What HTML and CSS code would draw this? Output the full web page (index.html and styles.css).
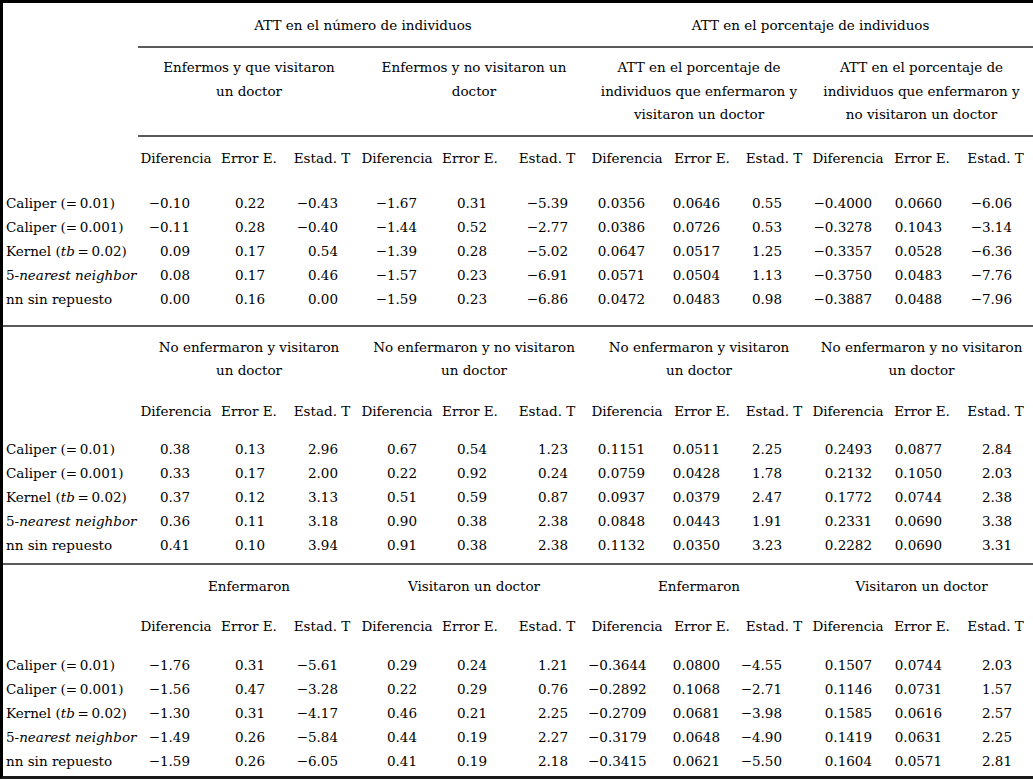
FILE: index.html
```html
<!DOCTYPE html>
<html lang="es">
<head>
<meta charset="utf-8">
<title>ATT</title>
<link rel="stylesheet" href="styles.css">
</head>
<body>
<table class="results">
  <colgroup>
    <col class="w-label">
    <col class="w76"><col class="w70"><col class="w76">
    <col class="w74"><col class="w72"><col class="w82">
    <col class="w78"><col class="w72"><col class="w72">
    <col class="w76"><col class="w72"><col class="w75">
  </colgroup>
  <tbody class="sec sec1">
    <tr class="title-row">
      <td class="label"></td>
      <th class="group" colspan="6">ATT en el número de individuos</th>
      <th class="group" colspan="6">ATT en el porcentaje de individuos</th>
    </tr>
    <tr class="sub-row">
      <td class="label"></td>
      <th class="sub" colspan="3">Enfermos y que visitaron<br>un doctor</th>
      <th class="sub" colspan="3">Enfermos y no visitaron un<br>doctor</th>
      <th class="sub" colspan="3">ATT en el porcentaje de<br>individuos que enfermaron y<br>visitaron un doctor</th>
      <th class="sub" colspan="3">ATT en el porcentaje de<br>individuos que enfermaron y<br>no visitaron un doctor</th>
    </tr>
    <tr class="stat-row">
      <td class="label"></td>
      <th>Diferencia</th><th>Error E.</th><th>Estad. T</th>
      <th>Diferencia</th><th>Error E.</th><th>Estad. T</th>
      <th>Diferencia</th><th>Error E.</th><th>Estad. T</th>
      <th>Diferencia</th><th>Error E.</th><th>Estad. T</th>
    </tr>
    <tr class="data-row">
      <td class="label">Caliper (=&thinsp;0.01)</td>
      <td>−0.10</td><td>0.22</td><td>−0.43</td><td>−1.67</td><td>0.31</td><td>−5.39</td>
      <td>0.0356</td><td>0.0646</td><td>0.55</td><td>−0.4000</td><td>0.0660</td><td>−6.06</td>
    </tr>
    <tr class="data-row">
      <td class="label">Caliper (=&thinsp;0.001)</td>
      <td>−0.11</td><td>0.28</td><td>−0.40</td><td>−1.44</td><td>0.52</td><td>−2.77</td>
      <td>0.0386</td><td>0.0726</td><td>0.53</td><td>−0.3278</td><td>0.1043</td><td>−3.14</td>
    </tr>
    <tr class="data-row">
      <td class="label">Kernel (<i>tb</i>&thinsp;=&thinsp;0.02)</td>
      <td>0.09</td><td>0.17</td><td>0.54</td><td>−1.39</td><td>0.28</td><td>−5.02</td>
      <td>0.0647</td><td>0.0517</td><td>1.25</td><td>−0.3357</td><td>0.0528</td><td>−6.36</td>
    </tr>
    <tr class="data-row">
      <td class="label">5-<i>nearest neighbor</i></td>
      <td>0.08</td><td>0.17</td><td>0.46</td><td>−1.57</td><td>0.23</td><td>−6.91</td>
      <td>0.0571</td><td>0.0504</td><td>1.13</td><td>−0.3750</td><td>0.0483</td><td>−7.76</td>
    </tr>
    <tr class="data-row last-row">
      <td class="label">nn sin repuesto</td>
      <td>0.00</td><td>0.16</td><td>0.00</td><td>−1.59</td><td>0.23</td><td>−6.86</td>
      <td>0.0472</td><td>0.0483</td><td>0.98</td><td>−0.3887</td><td>0.0488</td><td>−7.96</td>
    </tr>
  </tbody>
  <tbody class="sec sec2">
    <tr class="sub-row">
      <td class="label"></td>
      <th class="sub" colspan="3">No enfermaron y visitaron<br>un doctor</th>
      <th class="sub" colspan="3">No enfermaron y no visitaron<br>un doctor</th>
      <th class="sub" colspan="3">No enfermaron y visitaron<br>un doctor</th>
      <th class="sub" colspan="3">No enfermaron y no visitaron<br>un doctor</th>
    </tr>
    <tr class="stat-row">
      <td class="label"></td>
      <th>Diferencia</th><th>Error E.</th><th>Estad. T</th>
      <th>Diferencia</th><th>Error E.</th><th>Estad. T</th>
      <th>Diferencia</th><th>Error E.</th><th>Estad. T</th>
      <th>Diferencia</th><th>Error E.</th><th>Estad. T</th>
    </tr>
    <tr class="data-row">
      <td class="label">Caliper (=&thinsp;0.01)</td>
      <td>0.38</td><td>0.13</td><td>2.96</td><td>0.67</td><td>0.54</td><td>1.23</td>
      <td>0.1151</td><td>0.0511</td><td>2.25</td><td>0.2493</td><td>0.0877</td><td>2.84</td>
    </tr>
    <tr class="data-row">
      <td class="label">Caliper (=&thinsp;0.001)</td>
      <td>0.33</td><td>0.17</td><td>2.00</td><td>0.22</td><td>0.92</td><td>0.24</td>
      <td>0.0759</td><td>0.0428</td><td>1.78</td><td>0.2132</td><td>0.1050</td><td>2.03</td>
    </tr>
    <tr class="data-row">
      <td class="label">Kernel (<i>tb</i>&thinsp;=&thinsp;0.02)</td>
      <td>0.37</td><td>0.12</td><td>3.13</td><td>0.51</td><td>0.59</td><td>0.87</td>
      <td>0.0937</td><td>0.0379</td><td>2.47</td><td>0.1772</td><td>0.0744</td><td>2.38</td>
    </tr>
    <tr class="data-row">
      <td class="label">5-<i>nearest neighbor</i></td>
      <td>0.36</td><td>0.11</td><td>3.18</td><td>0.90</td><td>0.38</td><td>2.38</td>
      <td>0.0848</td><td>0.0443</td><td>1.91</td><td>0.2331</td><td>0.0690</td><td>3.38</td>
    </tr>
    <tr class="data-row last-row">
      <td class="label">nn sin repuesto</td>
      <td>0.41</td><td>0.10</td><td>3.94</td><td>0.91</td><td>0.38</td><td>2.38</td>
      <td>0.1132</td><td>0.0350</td><td>3.23</td><td>0.2282</td><td>0.0690</td><td>3.31</td>
    </tr>
  </tbody>
  <tbody class="sec sec3">
    <tr class="sub-row">
      <td class="label"></td>
      <th class="sub" colspan="3">Enfermaron</th>
      <th class="sub" colspan="3">Visitaron un doctor</th>
      <th class="sub" colspan="3">Enfermaron</th>
      <th class="sub" colspan="3">Visitaron un doctor</th>
    </tr>
    <tr class="stat-row">
      <td class="label"></td>
      <th>Diferencia</th><th>Error E.</th><th>Estad. T</th>
      <th>Diferencia</th><th>Error E.</th><th>Estad. T</th>
      <th>Diferencia</th><th>Error E.</th><th>Estad. T</th>
      <th>Diferencia</th><th>Error E.</th><th>Estad. T</th>
    </tr>
    <tr class="data-row">
      <td class="label">Caliper (=&thinsp;0.01)</td>
      <td>−1.76</td><td>0.31</td><td>−5.61</td><td>0.29</td><td>0.24</td><td>1.21</td>
      <td>−0.3644</td><td>0.0800</td><td>−4.55</td><td>0.1507</td><td>0.0744</td><td>2.03</td>
    </tr>
    <tr class="data-row">
      <td class="label">Caliper (=&thinsp;0.001)</td>
      <td>−1.56</td><td>0.47</td><td>−3.28</td><td>0.22</td><td>0.29</td><td>0.76</td>
      <td>−0.2892</td><td>0.1068</td><td>−2.71</td><td>0.1146</td><td>0.0731</td><td>1.57</td>
    </tr>
    <tr class="data-row">
      <td class="label">Kernel (<i>tb</i>&thinsp;=&thinsp;0.02)</td>
      <td>−1.30</td><td>0.31</td><td>−4.17</td><td>0.46</td><td>0.21</td><td>2.25</td>
      <td>−0.2709</td><td>0.0681</td><td>−3.98</td><td>0.1585</td><td>0.0616</td><td>2.57</td>
    </tr>
    <tr class="data-row">
      <td class="label">5-<i>nearest neighbor</i></td>
      <td>−1.49</td><td>0.26</td><td>−5.84</td><td>0.44</td><td>0.19</td><td>2.27</td>
      <td>−0.3179</td><td>0.0648</td><td>−4.90</td><td>0.1419</td><td>0.0631</td><td>2.25</td>
    </tr>
    <tr class="data-row last-row">
      <td class="label">nn sin repuesto</td>
      <td>−1.59</td><td>0.26</td><td>−6.05</td><td>0.41</td><td>0.19</td><td>2.18</td>
      <td>−0.3415</td><td>0.0621</td><td>−5.50</td><td>0.1604</td><td>0.0571</td><td>2.81</td>
    </tr>
  </tbody>
</table>
</body>
</html>
```

FILE: styles.css
```css
html, body {
  margin: 0;
  padding: 0;
  background: #fff;
}

body {
  font-family: "DejaVu Serif", "Liberation Serif", serif;
  font-size: 13.5px;
  color: #000;
}

.results {
  border-collapse: separate;
  border-spacing: 0;
  table-layout: fixed;
  width: 1033px;
  border-top: 3px solid #000;
  border-left: 3px solid #000;
  border-bottom: 3px solid #1a1a1a;
}

.w-label { width: 135px; }
.w70 { width: 70px; }
.w72 { width: 72px; }
.w74 { width: 74px; }
.w75 { width: 75px; }
.w76 { width: 76px; }
.w78 { width: 78px; }
.w82 { width: 82px; }

.results th,
.results td {
  padding: 0;
  line-height: 24px;
  font-weight: normal;
  white-space: nowrap;
  text-align: center;
  vertical-align: top;
}

.results i {
  font-style: italic;
}

/* left stub column */
.results td.label {
  text-align: left;
  padding-left: 3px;
}

/* group titles */
.title-row th.group {
  padding: 10px 0 9px;
  border-bottom: 2px solid #5a5a5a;
}

/* sub headers */
.sub-row th.sub {
  line-height: 23.5px;
}
.sec1 .sub-row th.sub {
  padding: 8px 0 8px;
  border-bottom: 2px solid #5a5a5a;
}
.sec2 .sub-row th.sub {
  padding: 9px 0 16px;
}
.sec3 .sub-row th.sub {
  padding: 10px 0 16px;
}

/* statistic headers */
.sec1 .stat-row th { padding: 9px 0 21px; }
.sec2 .stat-row th { padding: 0 0 14px; }
.sec3 .stat-row th { padding: 0 0 15px; }

/* numeric cells */
.data-row td { text-align: right; }
.data-row td:nth-child(2)  { padding-right: 24px; }
.data-row td:nth-child(3)  { padding-right: 19px; }
.data-row td:nth-child(4)  { padding-right: 22px; }
.data-row td:nth-child(5)  { padding-right: 17px; }
.data-row td:nth-child(6)  { padding-right: 19px; }
.data-row td:nth-child(7)  { padding-right: 20px; }
.data-row td:nth-child(8)  { padding-right: 21px; }
.data-row td:nth-child(9)  { padding-right: 18px; }
.data-row td:nth-child(10) { padding-right: 28px; }
.data-row td:nth-child(11) { padding-right: 14px; }
.data-row td:nth-child(12) { padding-right: 16px; }
.data-row td:nth-child(13) { padding-right: 21px; }

/* section endings */
.sec1 .last-row td { padding-bottom: 14px; border-bottom: 2px solid #5a5a5a; }
.sec2 .last-row td { padding-bottom: 6px; border-bottom: 2px solid #5a5a5a; }
.sec3 .last-row td { padding-bottom: 3px; }
```
